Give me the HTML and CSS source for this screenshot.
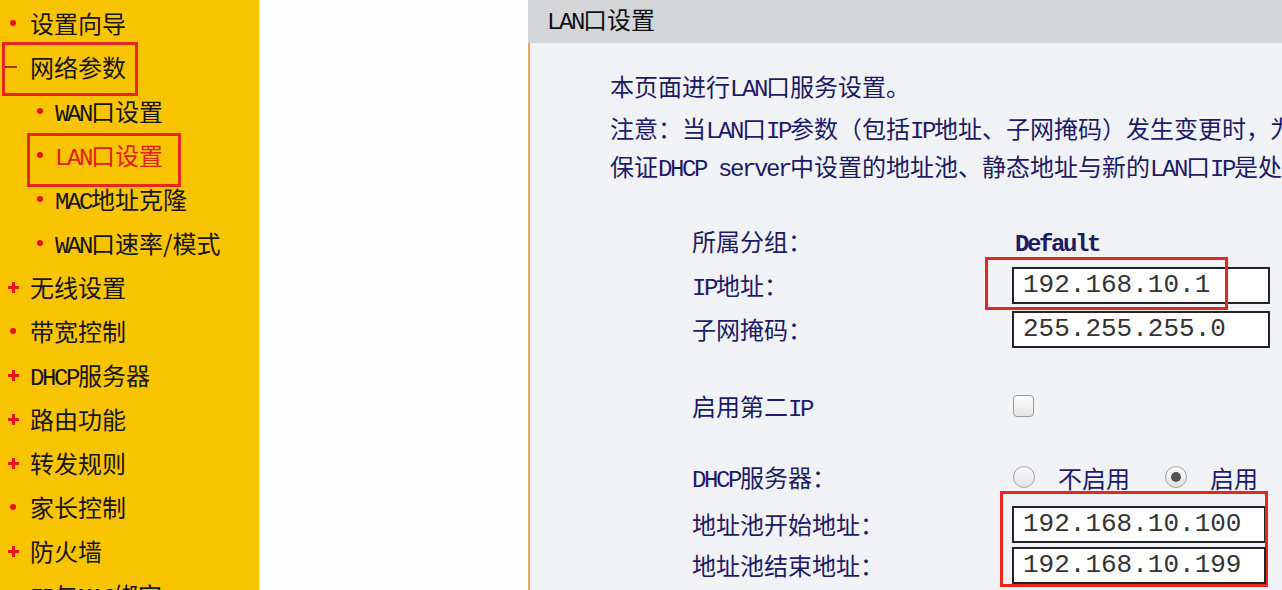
FILE: index.html
```html
<!DOCTYPE html>
<html lang="zh-CN">
<head>
    <meta charset="UTF-8">
    <title>LAN口设置</title>
    <link rel="stylesheet" href="styles.css">
</head>
<body>
    <div class="page">
        <nav class="menu">
            <div class="item"><span class="mark"><i class="dot"></i></span>设置向导</div>
            <div class="item boxed-group"><span class="mark"><i class="minus"></i></span>网络参数</div>
            <div class="item sub"><span class="mark"><i class="dot"></i></span><span class="en">WAN</span>口设置</div>
            <div class="item sub current boxed-sub"><span class="mark"><i class="dot"></i></span><span class="en">LAN</span>口设置</div>
            <div class="item sub"><span class="mark"><i class="dot"></i></span><span class="en">MAC</span>地址克隆</div>
            <div class="item sub"><span class="mark"><i class="dot"></i></span><span class="en">WAN</span>口速率/模式</div>
            <div class="item"><span class="mark"><i class="plus"></i></span>无线设置</div>
            <div class="item"><span class="mark"><i class="dot"></i></span>带宽控制</div>
            <div class="item"><span class="mark"><i class="plus"></i></span><span class="en">DHCP</span>服务器</div>
            <div class="item"><span class="mark"><i class="plus"></i></span>路由功能</div>
            <div class="item"><span class="mark"><i class="plus"></i></span>转发规则</div>
            <div class="item"><span class="mark"><i class="dot"></i></span>家长控制</div>
            <div class="item"><span class="mark"><i class="plus"></i></span>防火墙</div>
            <div class="item"><span class="mark"><i class="plus"></i></span><span class="en">IP</span>与<span class="en">MAC</span>绑定</div>
        </nav>

        <main class="panel">
            <div class="panel-title"><span class="en">LAN</span>口设置</div>
            <div class="panel-body">
                <p class="intro">本页面进行<span class="en">LAN</span>口服务设置。</p>
                <p class="note">注意：当<span class="en">LAN</span>口<span class="en">IP</span>参数（包括<span class="en">IP</span>地址、子网掩码）发生变更时，为</p>
                <p class="note">保证<span class="en">DHCP server</span>中设置的地址池、静态地址与新的<span class="en">LAN</span>口<span class="en">IP</span>是处于同一网段</p>

                <div class="form">
                    <div class="row">
                        <div class="label">所属分组：</div>
                        <div class="value text"><span class="en plain">Default</span></div>
                    </div>
                    <div class="row">
                        <div class="label"><span class="en">IP</span>地址：</div>
                        <div class="value">
                            <input class="ip" type="text" value="192.168.10.1">
                            <span class="redbox ip-box"></span>
                        </div>
                    </div>
                    <div class="row">
                        <div class="label">子网掩码：</div>
                        <div class="value"><input class="ip" type="text" value="255.255.255.0"></div>
                    </div>
                    <div class="row second-ip">
                        <div class="label">启用第二<span class="en">IP</span></div>
                        <div class="value"><span class="check"></span></div>
                    </div>
                    <div class="row dhcp">
                        <div class="label"><span class="en">DHCP</span>服务器：</div>
                        <div class="value">
                            <span class="radio"></span><span class="opt">不启用</span>
                            <span class="radio on"></span><span class="opt">启用</span>
                        </div>
                    </div>
                    <div class="row pool-start">
                        <div class="label">地址池开始地址：</div>
                        <div class="value">
                            <input class="ip pool" type="text" value="192.168.10.100">
                            <span class="redbox pool-box"></span>
                        </div>
                    </div>
                    <div class="row pool-end">
                        <div class="label">地址池结束地址：</div>
                        <div class="value"><input class="ip pool" type="text" value="192.168.10.199"></div>
                    </div>
                </div>
            </div>
        </main>
    </div>
</body>
</html>
```

FILE: styles.css
```css
body {
    margin: 0;
    height: 590px;
    overflow: hidden;
    background-color: #fdfdfd;
    font-family: "Noto Sans CJK SC", sans-serif;
    font-size: 24px;
}
.page {
    display: flex;
    height: 590px;
}

/* left menu */
.menu {
    width: 259px;
    flex: none;
    padding-top: 1px;
    background-color: #f8c400;
    border-right: 1px solid #f3e6b0;
    color: #151515;
}
.item {
    position: relative;
    height: 44px;
    line-height: 44px;
    white-space: nowrap;
}
.item.sub {
    padding-left: 27px;
}
.item.current {
    color: #e0201a;
}
.mark {
    display: inline-flex;
    vertical-align: top;
    width: 26px;
    height: 44px;
    margin-right: 4px;
    justify-content: center;
    align-items: center;
}
.item.sub .mark {
    margin-right: 2px;
}
.dot {
    width: 6px;
    height: 6px;
    border-radius: 50%;
    background-color: #e0141a;
}
.plus {
    position: relative;
    width: 11px;
    height: 11px;
}
.plus::before,
.plus::after {
    content: '';
    position: absolute;
    background-color: #e8141a;
}
.plus::before {
    left: 0;
    top: 4px;
    width: 11px;
    height: 3px;
}
.plus::after {
    left: 4px;
    top: 0;
    width: 3px;
    height: 11px;
}
.minus {
    width: 14px;
    height: 2px;
    margin-left: -6px;
    background-color: #a8301c;
}

/* red annotation frames */
.boxed-group::after,
.boxed-sub::after,
.redbox {
    content: '';
    position: absolute;
    box-sizing: border-box;
    border: 3px solid #e6261f;
    pointer-events: none;
}
.boxed-group::after {
    left: 2px;
    top: -3px;
    width: 136px;
    height: 54px;
}
.boxed-sub::after {
    left: 27px;
    top: 0;
    width: 154px;
    height: 54px;
}

/* right panel */
.panel {
    flex: 1;
    min-width: 0;
    margin-left: 268px;
    display: flex;
    flex-direction: column;
    overflow: hidden;
}
.panel-title {
    height: 43px;
    line-height: 38px;
    padding-left: 19px;
    background-color: #d4d5d7;
    color: #111;
    flex: none;
}
.panel-body {
    flex: 1;
    background-color: #f1f2f6;
    border-left: 2px solid #f2a55c;
    padding-left: 80px;
    color: #1b1b66;
}
.panel-body p {
    margin: 0;
    line-height: 38px;
    white-space: nowrap;
}
.panel-body .intro {
    margin-top: 24px;
    margin-bottom: 4px;
}

/* latin runs: half-width, like the router's bitmap font */
.en {
    font-family: "Liberation Mono", monospace;
    font-size: 24px;
    letter-spacing: -2.4px;
    line-height: 1;
}
.en.plain {
    font-weight: bold;
}

/* settings form */
.form {
    margin-top: 34px;
    margin-left: 82px;
}
.row {
    display: flex;
    height: 44px;
    white-space: nowrap;
}
.row.second-ip {
    margin-top: 33px;
}
.row.dhcp {
    margin-top: 27px;
}
.row.pool-start {
    margin-top: 3px;
}
.row.pool-end {
    margin-top: -3px;
}
.label {
    width: 320px;
    flex: none;
    line-height: 44px;
}
.value {
    position: relative;
    display: flex;
    align-items: center;
}
.value.text {
    display: block;
    line-height: 44px;
    padding-left: 3px;
}
.ip {
    box-sizing: border-box;
    width: 258px;
    height: 37px;
    margin: 0;
    padding: 0 0 0 9px;
    border: 2px solid #23232e;
    background-color: #fff;
    font-family: "Liberation Mono", monospace;
    font-size: 26px;
    color: #333;
    outline: none;
}
.ip.pool {
    width: 254px;
}
.ip-box {
    left: -27px;
    top: -6px;
    width: 243px;
    height: 53px;
}
.pool-box {
    left: -12px;
    top: -11px;
    width: 268px;
    height: 96px;
}

.check {
    width: 21px;
    height: 22px;
    margin-left: 1px;
    box-sizing: border-box;
    border: 1px solid #9a9a9a;
    border-radius: 4px;
    background: linear-gradient(#fdfdfd, #e4e4e4);
}
.radio {
    position: relative;
    width: 22px;
    height: 22px;
    margin-left: 1px;
    box-sizing: border-box;
    border: 1px solid #a4a4a4;
    border-radius: 50%;
    background: linear-gradient(#fbfbfb, #e2e2e2);
}
.radio.on::after {
    content: '';
    position: absolute;
    left: 5px;
    top: 5px;
    width: 10px;
    height: 10px;
    border-radius: 50%;
    background-color: #555;
}
.opt {
    margin-left: 23px;
    margin-right: 34px;
    color: #1b1b66;
}
```
